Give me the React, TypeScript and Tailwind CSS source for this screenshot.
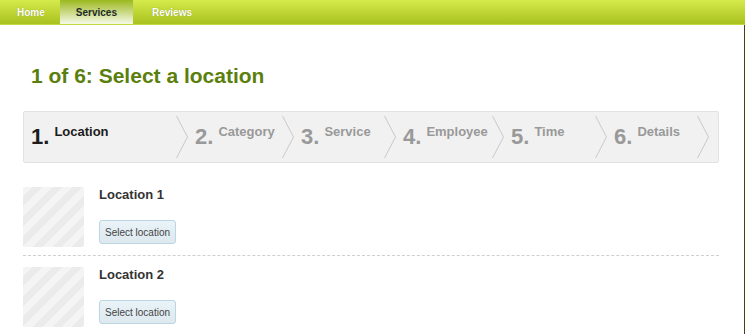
const steps = [
    { num: "1", label: "Location", width: "w-[145px]", active: true },
    { num: "2", label: "Category", width: "w-[87px]", active: false },
    { num: "3", label: "Service", width: "w-[83px]", active: false },
    { num: "4", label: "Employee", width: "w-[89px]", active: false },
    { num: "5", label: "Time", width: "w-[84px]", active: false },
    { num: "6", label: "Details", width: "w-[83px]", active: false },
];

const locations = ["Location 1", "Location 2"];

const Chevron = () => (
    <svg width="12" height="42" viewBox="0 0 12 42" className="shrink-0">
        <polyline points="0.5,0 11.5,21 0.5,42" fill="none" stroke="#c9c9c9" strokeWidth="1" />
    </svg>
);

const Nav = () => (
    <div className="flex h-[25px] w-full border-b border-[#c3d944] bg-[linear-gradient(#d5ea4c,#a9c21f)] text-[10px] font-bold">
        <a className="flex items-center pl-[17px] pr-[15px] text-white [text-shadow:0_0_1px_rgba(0,0,0,0.3)]">Home</a>
        <a className="flex items-center bg-[linear-gradient(#9cb91f,#f5f9e8)] px-[16px] text-[#1e2a2a]">Services</a>
        <a className="flex items-center px-[19px] text-white [text-shadow:0_0_1px_rgba(0,0,0,0.3)]">Reviews</a>
    </div>
);

const StepsBar = () => (
    <div className="flex h-[52px] items-center rounded-[2px] border border-[#e2e2e2] bg-[#f1f1f1] pl-[7px]">
        {steps.map((step) => (
            <div key={step.num} className="flex items-center">
                <div className={`flex items-start ${step.width} ${step.active ? "text-[#1c1c1c]" : "text-[#999999]"}`}>
                    <span className="text-[22px] font-bold leading-none">{step.num}.</span>
                    <span className="ml-[5px] -mt-[1px] text-[13px] font-bold leading-none">{step.label}</span>
                </div>
                <Chevron />
                <div className="w-[7px]" />
            </div>
        ))}
    </div>
);

const LocationRow = ({ name, last }: { name: string; last: boolean }) => (
    <div className={last ? "flex" : "flex border-b border-dashed border-[#cfcfcf] pb-[8px] mb-[11px]"}>
        <div className="h-[60px] w-[61px] shrink-0 bg-[repeating-linear-gradient(135deg,#f4f4f4_0px,#f4f4f4_7px,#ebebeb_7px,#ebebeb_14px)]" />
        <div className="ml-[15px] flex flex-col">
            <h3 className="text-[13px] font-bold leading-[15px] text-[#333333]">{name}</h3>
            <button className="mt-[18px] h-[24px] w-[77px] rounded-[3px] border border-[#b9d6e2] bg-[linear-gradient(#e9f3f8,#dde9ef)] text-[10px] text-[#444444]">
                Select location
            </button>
        </div>
    </div>
);

export default function App() {
    return (
        <div className="h-[334px] w-[745px] overflow-hidden bg-white font-['Liberation_Sans',Arial,sans-serif]">
            <Nav />
            <div className="h-full border-r border-[#4f3c17] pl-[23px] pr-[25px] pt-[39px]">
                <h1 className="ml-[8px] mb-[23px] text-[21px] font-bold leading-[24px] text-[#5b7f0c]">
                    1 of 6: Select a location
                </h1>
                <StepsBar />
                <div className="mt-[24px]">
                    {locations.map((name, i) => (
                        <LocationRow key={name} name={name} last={i === locations.length - 1} />
                    ))}
                </div>
            </div>
        </div>
    );
}
